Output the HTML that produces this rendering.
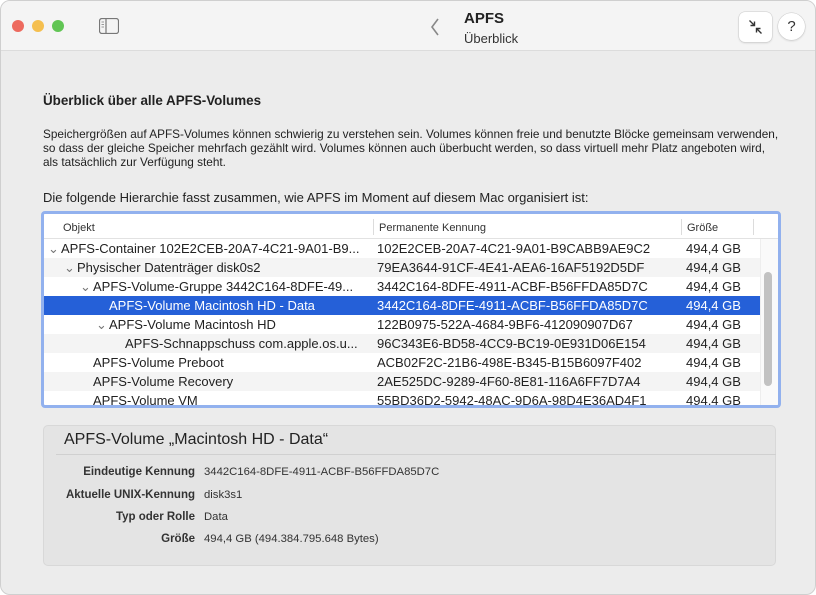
<!DOCTYPE html>
<html><head><meta charset="utf-8"><style>
*{margin:0;padding:0;box-sizing:border-box}
body{width:816px;height:595px;background:#fff;font-family:"Liberation Sans",sans-serif;color:#222;overflow:hidden;position:relative}
.win{position:absolute;left:0;top:0;width:816px;height:595px;border-radius:10px;background:#ececec;overflow:hidden;border:1px solid #cfcfcf}
.tb{position:absolute;left:0;top:0;width:816px;height:50px;background:#f4f4f4;border-bottom:1px solid #dcdcdc}
.dot{position:absolute;top:19px;width:12px;height:12px;border-radius:50%}
.abs{position:absolute;white-space:nowrap}
.panel{position:absolute;left:3px;top:51px;width:808px;height:540px;background:#ececec}
.tbl{position:absolute;left:40px;top:210px;width:740px;height:197px;border:3px solid #92b1ee;border-radius:4px;background:#fff;overflow:hidden}
.hdr{position:absolute;left:0;top:0;width:734px;height:25px;background:#fff;border-bottom:1px solid #e2e2e2;font-size:11px;color:#333}
.row{position:absolute;left:0;width:716px;height:19px;font-size:13px;line-height:19px;color:#222}
.row span{position:absolute;white-space:nowrap}
.alt{background:#f4f4f4}
.sel{background:#2560d8;color:#fff}
.sep{position:absolute;top:5px;width:1px;height:16px;background:#dcdcdc}
.det{position:absolute;left:42px;top:424px;width:733px;height:141px;background:#e4e4e4;border:1px solid #d8d8d8;border-radius:5px}
.lab{position:absolute;right:580px;font-size:11.5px;font-weight:bold;color:#333;white-space:nowrap}
.val{position:absolute;left:160px;font-size:11.3px;color:#333;white-space:nowrap}
</style></head><body>
<div class="win">
<div class="tb">
<div class="dot" style="left:11px;background:#ed6a5e"></div>
<div class="dot" style="left:31px;background:#f5bf4f"></div>
<div class="dot" style="left:51px;background:#61c554"></div>
<svg class="abs" style="left:98px;top:17px" width="20" height="16"><rect x="0.5" y="0.5" width="19" height="15" rx="2.5" fill="none" stroke="#777" stroke-width="1.2"/><line x1="7" y1="1" x2="7" y2="15" stroke="#777" stroke-width="1.2"/><line x1="2.5" y1="4" x2="5" y2="4" stroke="#999"/><line x1="2.5" y1="6.5" x2="5" y2="6.5" stroke="#999"/><line x1="2.5" y1="9" x2="5" y2="9" stroke="#999"/></svg>
<svg class="abs" style="left:429px;top:17px" width="10" height="18"><path d="M8 1L2 9L8 17" fill="none" stroke="#888" stroke-width="1.6"/></svg>
<div class="abs" style="left:463px;top:9px;font-size:15px;font-weight:bold;color:#222">APFS</div>
<div class="abs" style="left:463px;top:30px;font-size:13px;color:#333">Überblick</div>
<div class="abs" style="left:738px;top:11px;width:33px;height:30px;background:#fff;border-radius:6px;box-shadow:0 0 0 0.5px #ccc,0 1px 2px rgba(0,0,0,.15)">
<svg width="33" height="30"><path d="M10.5 8.5L15.5 13.5M15.5 9.5V13.5H11.5M22.5 21.5L17.5 16.5M17.5 20.5V16.5H21.5" fill="none" stroke="#333" stroke-width="1.4"/></svg></div>
<div class="abs" style="left:777px;top:12px;width:27px;height:27px;border-radius:50%;background:#fff;box-shadow:0 0 0 0.5px #ccc,0 1px 2px rgba(0,0,0,.15);font-size:15px;text-align:center;line-height:27px;color:#333">?</div>
</div>
<div class="panel"></div>
<div class="abs" style="left:42px;top:92px;font-size:13.4px;font-weight:bold;color:#222">Überblick über alle APFS-Volumes</div>
<div class="abs" style="left:42px;top:126px;font-size:11.8px;line-height:14px;color:#222;white-space:nowrap">Speichergrößen auf APFS-Volumes können schwierig zu verstehen sein. Volumes können freie und benutzte Blöcke gemeinsam verwenden,<br>so dass der gleiche Speicher mehrfach gezählt wird. Volumes können auch überbucht werden, so dass virtuell mehr Platz angeboten wird,<br>als tatsächlich zur Verfügung steht.</div>
<div class="abs" style="left:42px;top:189px;font-size:13px;color:#222">Die folgende Hierarchie fasst zusammen, wie APFS im Moment auf diesem Mac organisiert ist:</div>
<div class="tbl">
<div class="hdr"><span class="abs" style="left:19px;top:8px">Objekt</span><div class="sep" style="left:329px"></div><span class="abs" style="left:335px;top:8px">Permanente Kennung</span><div class="sep" style="left:637px"></div><span class="abs" style="left:643px;top:8px">Größe</span><div class="sep" style="left:709px"></div></div>
<div class="row" style="top:25px"><span style="left:4px;color:#777">⌄</span><span style="left:17px">APFS-Container 102E2CEB-20A7-4C21-9A01-B9...</span><span style="left:333px">102E2CEB-20A7-4C21-9A01-B9CABB9AE9C2</span><span style="left:642px">494,4 GB</span></div>
<div class="row alt" style="top:44px"><span style="left:20px;color:#777">⌄</span><span style="left:33px">Physischer Datenträger disk0s2</span><span style="left:333px">79EA3644-91CF-4E41-AEA6-16AF5192D5DF</span><span style="left:642px">494,4 GB</span></div>
<div class="row" style="top:63px"><span style="left:36px;color:#777">⌄</span><span style="left:49px">APFS-Volume-Gruppe 3442C164-8DFE-49...</span><span style="left:333px">3442C164-8DFE-4911-ACBF-B56FFDA85D7C</span><span style="left:642px">494,4 GB</span></div>
<div class="row sel" style="top:82px"><span style="left:65px">APFS-Volume Macintosh HD - Data</span><span style="left:333px">3442C164-8DFE-4911-ACBF-B56FFDA85D7C</span><span style="left:642px">494,4 GB</span></div>
<div class="row" style="top:101px"><span style="left:52px;color:#777">⌄</span><span style="left:65px">APFS-Volume Macintosh HD</span><span style="left:333px">122B0975-522A-4684-9BF6-412090907D67</span><span style="left:642px">494,4 GB</span></div>
<div class="row alt" style="top:120px"><span style="left:81px">APFS-Schnappschuss com.apple.os.u...</span><span style="left:333px">96C343E6-BD58-4CC9-BC19-0E931D06E154</span><span style="left:642px">494,4 GB</span></div>
<div class="row" style="top:139px"><span style="left:49px">APFS-Volume Preboot</span><span style="left:333px">ACB02F2C-21B6-498E-B345-B15B6097F402</span><span style="left:642px">494,4 GB</span></div>
<div class="row alt" style="top:158px"><span style="left:49px">APFS-Volume Recovery</span><span style="left:333px">2AE525DC-9289-4F60-8E81-116A6FF7D7A4</span><span style="left:642px">494,4 GB</span></div>
<div class="row" style="top:177px"><span style="left:49px">APFS-Volume VM</span><span style="left:333px">55BD36D2-5942-48AC-9D6A-98D4E36AD4F1</span><span style="left:642px">494,4 GB</span></div>
<div class="abs" style="left:716px;top:25px;width:18px;height:170px;background:#fafafa;border-left:1px solid #eee"></div>
<div class="abs" style="left:720px;top:58px;width:8px;height:114px;background:#c2c2c2;border-radius:4px"></div>
</div>
<div class="det">
<div class="abs" style="left:20px;top:5px;font-size:16px;color:#222">APFS-Volume „Macintosh HD - Data“</div>
<div class="abs" style="left:12px;top:28px;width:720px;height:1px;background:#d0d0d0"></div>
<div class="lab" style="top:40px">Eindeutige Kennung</div><div class="val" style="top:40px">3442C164-8DFE-4911-ACBF-B56FFDA85D7C</div>
<div class="lab" style="top:63px">Aktuelle UNIX-Kennung</div><div class="val" style="top:63px">disk3s1</div>
<div class="lab" style="top:85px">Typ oder Rolle</div><div class="val" style="top:85px">Data</div>
<div class="lab" style="top:107px">Größe</div><div class="val" style="top:107px">494,4 GB (494.384.795.648 Bytes)</div>
</div>
</div>
</body></html>
